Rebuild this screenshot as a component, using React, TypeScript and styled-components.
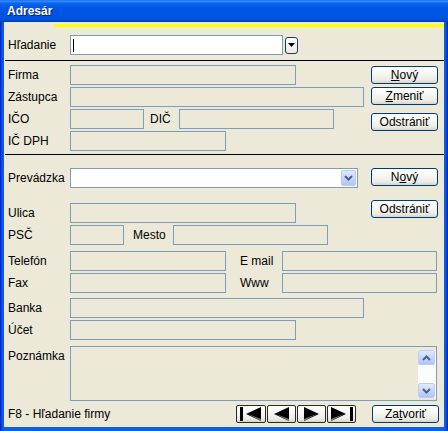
import React from "react";
import styled, { createGlobalStyle } from "styled-components";

const Global = createGlobalStyle`
  html, body { margin: 0; padding: 0; background: #ffffff; }
  body { font-family: "Liberation Sans", Arial, sans-serif; font-size: 12px; color: #000; }
`;

const Frame = styled.div`
  width: 448px;
  height: 431px;
  display: flex;
  flex-direction: column;
  background: linear-gradient(90deg, #0019cf 0px, #0855dd 2px, #0b5ee8 4px, #0b5ee8 444px, #0855dd 446px, #001ea0 448px);
  box-sizing: border-box;
`;

const TitleBar = styled.div`
  height: 22px;
  flex: none;
  display: flex;
  align-items: center;
  padding-left: 7px;
  background: linear-gradient(180deg, #0a5fe8 0px, #3d95ff 1px, #0a66f0 3px, #0056e6 8px, #0054e3 14px, #0052df 19px, #0046c4 21px, #0033aa 22px);
  color: #fff;
  font-weight: bold;
  font-size: 12px;
  text-shadow: 1px 1px 0 #0a1e6e;
`;

const Client = styled.div`
  flex: 1;
  margin: 0 4px 4px 4px;
  background: #ece9d8;
  display: flex;
  flex-direction: column;
`;

const YellowBar = styled.div`
  height: 3px;
  margin: 2px 0 0 51px;
  background: #ffff00;
`;

const Separator = styled.div<{ $mt: number }>`
  height: 1px;
  margin-top: ${(p) => p.$mt}px;
  margin-left: 1px;
  background: #000;
`;

const Row = styled.div<{ $mt?: number; $h?: number }>`
  display: flex;
  align-items: center;
  height: ${(p) => p.$h ?? 20}px;
  margin-top: ${(p) => p.$mt ?? 0}px;
  padding-left: 4px;
`;

const Label = styled.div<{ $w: number; $ml?: number; $top?: boolean }>`
  width: ${(p) => p.$w}px;
  margin-left: ${(p) => p.$ml ?? 0}px;
  flex: none;
  white-space: nowrap;
  align-self: ${(p) => (p.$top ? "flex-start" : "center")};
  padding-top: ${(p) => (p.$top ? 3 : 0)}px;
`;

const Field = styled.div<{ $w: number; $white?: boolean }>`
  width: ${(p) => p.$w}px;
  height: 100%;
  box-sizing: border-box;
  border: 1px solid #7f9db9;
  background: ${(p) => (p.$white ? "#ffffff" : "#ece9d8")};
  flex: none;
  display: flex;
  align-items: center;
  position: relative;
`;

const Caret = styled.div`
  width: 1px;
  height: 13px;
  margin-left: 2px;
  background: #000;
`;

const SmallDrop = styled.div`
  width: 13px;
  height: 17px;
  margin-left: 2px;
  box-sizing: border-box;
  border: 1px solid #1c3a5e;
  border-radius: 3px;
  background: linear-gradient(180deg, #ffffff, #ece9e0);
  display: flex;
  align-items: center;
  justify-content: center;
`;

const ComboBtn = styled.div`
  position: absolute;
  right: 1px;
  top: 1px;
  bottom: 1px;
  width: 15px;
  box-sizing: border-box;
  border: 1px solid #bccbf3;
  border-radius: 2px;
  background: linear-gradient(180deg, #e0e9fe, #c3d3fd 60%, #b2c5f7);
  display: flex;
  align-items: center;
  justify-content: center;
`;

const Section = styled.div<{ $mt: number }>`
  display: flex;
  margin-top: ${(p) => p.$mt}px;
`;

const Column = styled.div`
  display: flex;
  flex-direction: column;
  flex: 1;
`;

const ButtonColumn = styled.div`
  width: 67px;
  margin-left: 7px;
  margin-right: 6px;
  display: flex;
  flex-direction: column;
  flex: none;
`;

const XpButton = styled.div<{ $mt?: number; $ml?: number; $w?: number; $h?: number }>`
  width: ${(p) => p.$w ?? 67}px;
  height: ${(p) => p.$h ?? 18}px;
  margin-top: ${(p) => p.$mt ?? 0}px;
  margin-left: ${(p) => p.$ml ?? 0}px;
  box-sizing: border-box;
  border: 1px solid #003c74;
  border-radius: 3px;
  background: linear-gradient(180deg, #ffffff 0%, #f6f6f2 45%, #ecebe4 80%, #d8d4c8 100%);
  display: flex;
  align-items: center;
  justify-content: center;
  font-size: 12px;
  flex: none;
  u { text-decoration: underline; }
`;

const ScrollBox = styled.div`
  position: absolute;
  right: 0;
  top: 3px;
  bottom: 2px;
  width: 18px;
  background: #fcfcfe;
  display: flex;
  flex-direction: column;
  justify-content: space-between;
`;

const ScrollBtn = styled.div`
  height: 15px;
  width: 17px;
  box-sizing: border-box;
  border: 1px solid #bccbf3;
  border-radius: 2px;
  background: linear-gradient(180deg, #e0e9fe, #c3d3fd 60%, #b2c5f7);
  display: flex;
  align-items: center;
  justify-content: center;
`;

const Footer = styled.div`
  display: flex;
  align-items: center;
  height: 18px;
  margin-top: 4px;
  padding-left: 4px;
`;

const FooterText = styled.div`
  width: 228px;
  flex: none;
`;

const NavGroup = styled.div`
  display: flex;
  gap: 1px;
`;

const NavButton = styled(XpButton)`
  border-color: #2a2a2a;
  border-radius: 2px;
`;

const Chevron = ({ up }: { up?: boolean }) => (
  <svg width="9" height="6" viewBox="0 0 9 6">
    <path
      d={up ? "M1 5 L4.5 1.5 L8 5" : "M1 1 L4.5 4.5 L8 1"}
      fill="none"
      stroke="#4d6185"
      strokeWidth="2"
    />
  </svg>
);

const NavIcon = ({ kind }: { kind: "first" | "prev" | "next" | "last" }) => {
  const left = kind === "first" || kind === "prev";
  const tri = left ? "M4 7 L19 0 L19 14 Z" : "M4 0 L19 7 L4 14 Z";
  const shade = left ? "M6 7 L19 12 L19 14 Z" : "M4 12 L17 7 L4 14 Z";
  const shift = kind === "first" ? 3 : kind === "last" ? -3 : 0;
  return (
    <svg width="24" height="14" viewBox="0 0 24 14">
      <g transform={`translate(${shift},0)`}>
        <path d={tri} fill="#000" />
        <path d={shade} fill="#7a7a7a" />
      </g>
      {kind === "first" && <rect x="1" y="0" width="3" height="14" fill="#000" />}
      {kind === "last" && <rect x="20" y="0" width="3" height="14" fill="#000" />}
    </svg>
  );
};

export default function App() {
  return (
    <>
      <Global />
      <Frame>
        <TitleBar>Adresár</TitleBar>
        <Client>
          <YellowBar />
          <Row $mt={8}>
            <Label $w={62}>Hľadanie</Label>
            <Field $w={213} $white>
              <Caret />
            </Field>
            <SmallDrop>
              <svg width="7" height="4" viewBox="0 0 7 4">
                <path d="M0 0 L7 0 L3.5 4 Z" fill="#000" />
              </svg>
            </SmallDrop>
          </Row>
          <Separator $mt={5} />
          <Section $mt={4}>
            <Column>
              <Row>
                <Label $w={62}>Firma</Label>
                <Field $w={226} />
              </Row>
              <Row $mt={2}>
                <Label $w={62}>Zástupca</Label>
                <Field $w={294} />
              </Row>
              <Row $mt={2}>
                <Label $w={62}>IČO</Label>
                <Field $w={74} />
                <Label $w={29} $ml={6}>DIČ</Label>
                <Field $w={155} />
              </Row>
              <Row $mt={2}>
                <Label $w={62}>IČ DPH</Label>
                <Field $w={156} />
              </Row>
            </Column>
            <ButtonColumn>
              <XpButton $mt={1}>
                <span><u>N</u>ový</span>
              </XpButton>
              <XpButton $mt={3}>
                <span><u>Z</u>meniť</span>
              </XpButton>
              <XpButton $mt={8}>Odstrániť</XpButton>
            </ButtonColumn>
          </Section>
          <Separator $mt={3} />
          <Section $mt={13}>
            <Column>
              <Row>
                <Label $w={62}>Prevádzka</Label>
                <Field $w={288} $white>
                  <ComboBtn>
                    <Chevron />
                  </ComboBtn>
                </Field>
              </Row>
              <Row $mt={15}>
                <Label $w={62}>Ulica</Label>
                <Field $w={226} />
              </Row>
              <Row $mt={2}>
                <Label $w={62}>PSČ</Label>
                <Field $w={54} />
                <Label $w={40} $ml={9}>Mesto</Label>
                <Field $w={155} />
              </Row>
            </Column>
            <ButtonColumn>
              <XpButton>
                <span>N<u>o</u>vý</span>
              </XpButton>
              <XpButton $mt={14}>Odstrániť</XpButton>
            </ButtonColumn>
          </Section>
          <Row $mt={6}>
            <Label $w={62}>Telefón</Label>
            <Field $w={156} />
            <Label $w={42} $ml={14}>E mail</Label>
            <Field $w={155} />
          </Row>
          <Row $mt={2}>
            <Label $w={62}>Fax</Label>
            <Field $w={156} />
            <Label $w={42} $ml={14}>Www</Label>
            <Field $w={155} />
          </Row>
          <Row $mt={5}>
            <Label $w={62}>Banka</Label>
            <Field $w={294} />
          </Row>
          <Row $mt={2}>
            <Label $w={62}>Účet</Label>
            <Field $w={226} />
          </Row>
          <Row $mt={6} $h={55}>
            <Label $w={62} $top>Poznámka</Label>
            <Field $w={367}>
              <ScrollBox>
                <ScrollBtn>
                  <Chevron up />
                </ScrollBtn>
                <ScrollBtn>
                  <Chevron />
                </ScrollBtn>
              </ScrollBox>
            </Field>
          </Row>
          <Footer>
            <FooterText>F8 - Hľadanie firmy</FooterText>
            <NavGroup>
              <NavButton $w={30}><NavIcon kind="first" /></NavButton>
              <NavButton $w={29}><NavIcon kind="prev" /></NavButton>
              <NavButton $w={29}><NavIcon kind="next" /></NavButton>
              <NavButton $w={29}><NavIcon kind="last" /></NavButton>
            </NavGroup>
            <XpButton $ml={16}>
              <span>Za<u>t</u>voriť</span>
            </XpButton>
          </Footer>
        </Client>
      </Frame>
    </>
  );
}
